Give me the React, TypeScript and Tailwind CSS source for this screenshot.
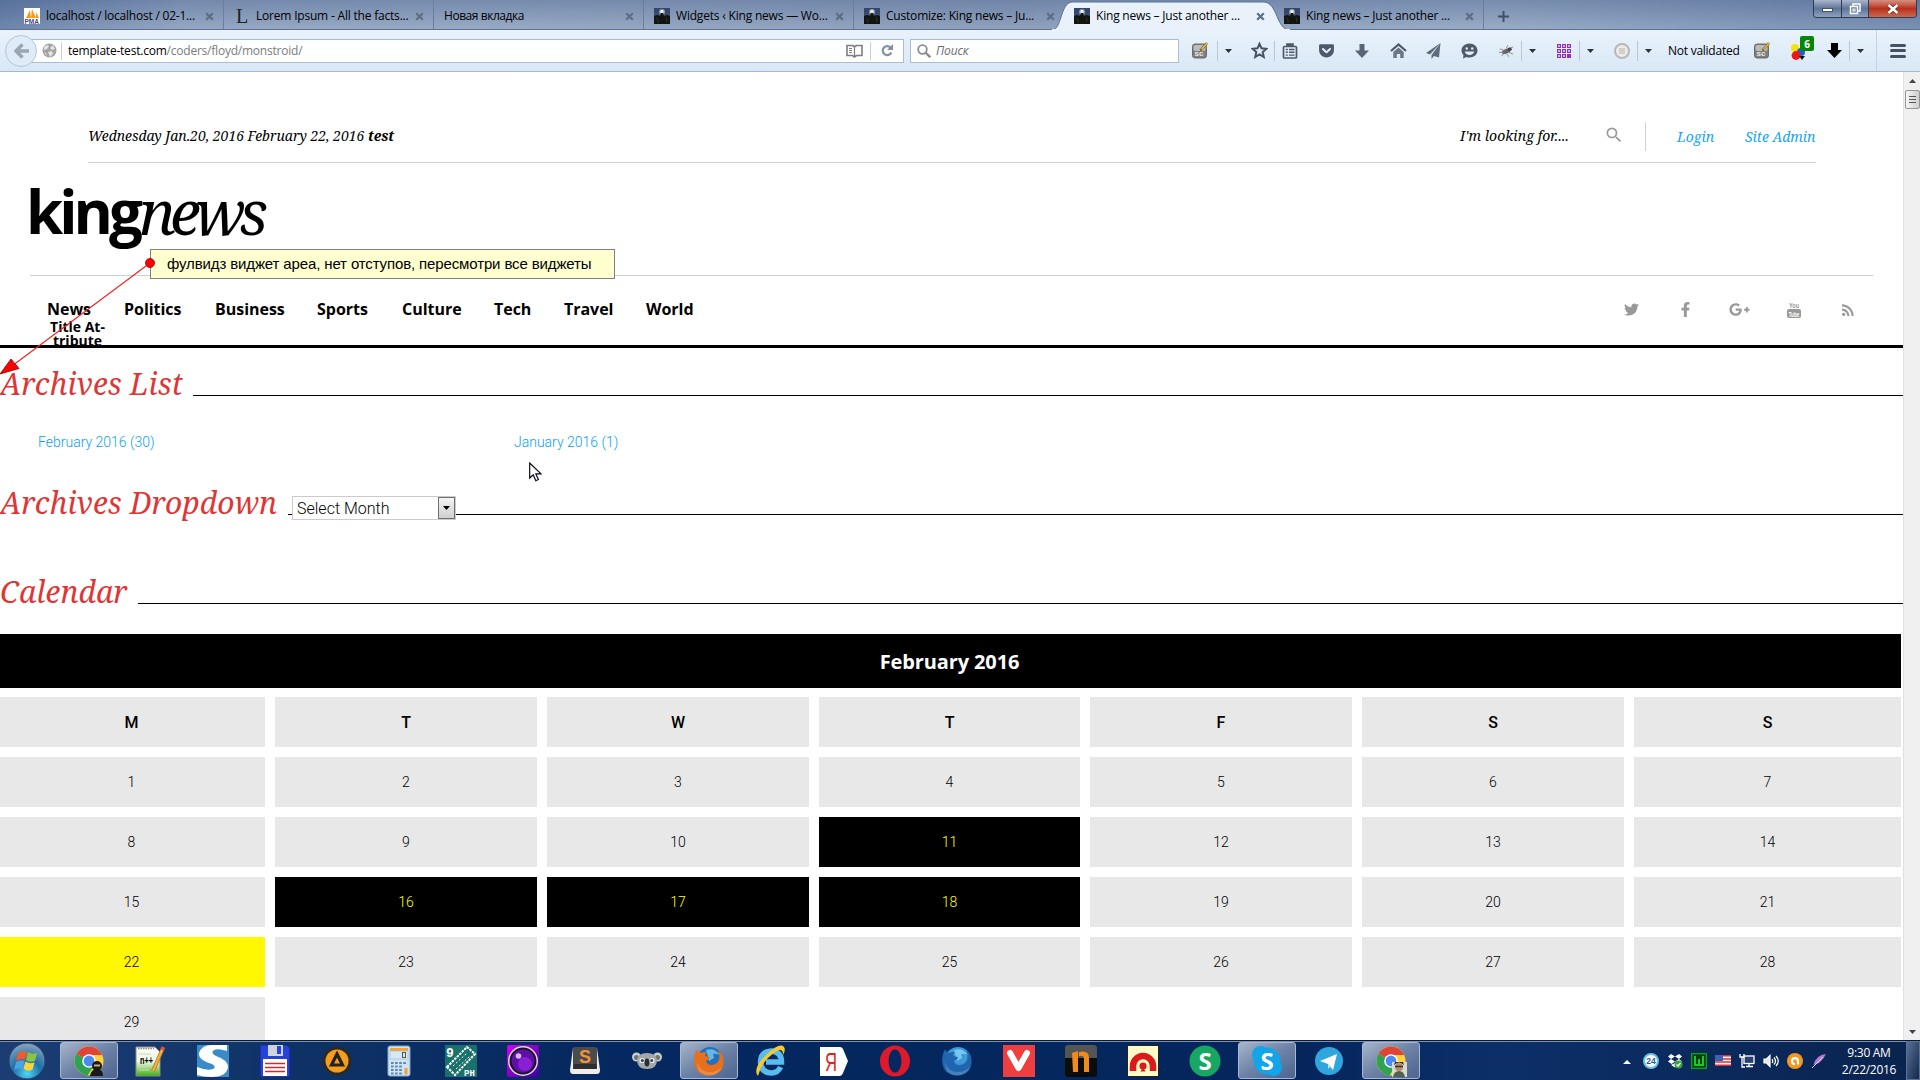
import React from "react";
import { FaTwitter, FaFacebookF, FaGooglePlusG, FaGetPocket } from "react-icons/fa";
import { MdSearch, MdRssFeed } from "react-icons/md";

const UI = "font-['Open_Sans']";
const SERIF = "font-['Noto_Serif','Droid_Serif','DejaVu_Serif_Condensed','DejaVu_Serif',serif]";

function ThemeIcon() {
  return (
    <svg width="16" height="16" viewBox="0 0 16 16">
      <rect width="16" height="16" fill="#3b4c6e" />
      <rect width="16" height="5" fill="#34466c" />
      <circle cx="8" cy="4" r="3" fill="#8f9db8" />
      <circle cx="8" cy="3.5" r="1.700" fill="#f3efdc" />
      <path d="M0 8l3-1 3 1 1-3h2l1 3 3-1 3 1v8H0z" fill="#12140f" />
      <path d="M2 10l2 1v4M12 9l1 5" stroke="#2d3324" fill="none" />
    </svg>
  );
}
function PmaIcon() {
  return (
    <svg width="16" height="16" viewBox="0 0 16 16">
      <rect width="16" height="16" fill="#fff" />
      <path d="M2 10L6 2l1 8zM7 10l1-9 4 9zM12 10V4l3 6z" fill="#f59a1b" />
      <text x="0.5" y="16" fontSize="6.5" fontWeight="700" fontFamily="Liberation Sans" fill="#4a4a86">PMA</text>
    </svg>
  );
}
function LoremIcon() {
  return <span className="w-4 text-center font-['Liberation_Serif'] text-[20px] leading-4 text-[#222]">L</span>;
}
function CloseX() {
  return (
    <svg width="9" height="9" viewBox="0 0 9 9">
      <path d="M1.200 1.200l6.600 6.600M7.800 1.200L1.200 7.800" stroke="#5c6d84" strokeWidth="2.200" />
    </svg>
  );
}

const tabs = [
  { icon: <PmaIcon />, label: "localhost / localhost / 02-1...", cls: "w-[210px] ml-[14px] border-r", pad: "pl-[10px]", tr: "tracking-[-0.220px]" },
  { icon: <LoremIcon />, label: "Lorem Ipsum - All the facts...", cls: "w-[210px] border-r", pad: "pl-[10px]", tr: "tracking-[-0.200px]" },
  { icon: null, label: "Новая вкладка", cls: "w-[210px] border-r", pad: "pl-[10px]", tr: "tracking-[-0.450px]" },
  { icon: <ThemeIcon />, label: "Widgets ‹ King news — Wo...", cls: "w-[210px] border-r", pad: "pl-[10px]", tr: "tracking-[-0.200px]" },
  { icon: <ThemeIcon />, label: "Customize: King news – Ju...", cls: "w-[210px]", pad: "pl-[10px]", tr: "tracking-[-0.200px]" },
  { icon: <ThemeIcon />, label: "King news – Just another ...", cls: "w-[210px]", pad: "pl-[10px]", tr: "tracking-[-0.200px]", active: true },
  { icon: <ThemeIcon />, label: "King news – Just another ...", cls: "w-[210px] border-r", pad: "pl-[10px]", tr: "tracking-[-0.200px]" },
];

function TabBar() {
  return (
    <div className="relative flex h-[30px] items-stretch border-b border-[#5b7290] bg-[linear-gradient(to_right,#637ca6_0,#8b9fbe_180px,#8fa3c0_500px,#8699b8_1000px,#90a5c2_1500px,#6e87ad_1920px)]">
      <div className="absolute inset-0 bg-[linear-gradient(to_bottom,rgba(60,85,130,0.3),rgba(255,255,255,0.08))]" />
      {tabs.map((t, i) => (
        <div key={i} className={`relative flex items-center ${t.cls} ${t.pad} border-[#6b7f9c]`}>
          {t.active && (
            <svg className="absolute -left-[12px] top-[1px] z-0" width="238" height="29" viewBox="0 0 238 29">
              <path d="M0 29C10 29 8 2 20 1H212C226 2 224 29 238 29z" fill="#e9f2fb" stroke="#5b7290" />
              <path d="M0 29H238" stroke="#e9f2fb" strokeWidth="2" />
            </svg>
          )}
          <div className="relative flex flex-1 items-center pt-[3px]">
            {t.icon && <span className="mr-[6px] flex w-4">{t.icon}</span>}
            <span className={`flex-1 whitespace-nowrap text-[12px] leading-[16px] text-black ${UI} ${t.tr}`}>{t.label}</span>
            <span className="mr-[9px] flex">
              <CloseX />
            </span>
          </div>
        </div>
      ))}
      <div className="relative flex w-[38px] items-center justify-center pt-[3px]">
        <svg width="11" height="11" viewBox="0 0 11 11">
          <path d="M5.500 0v11M0 5.500h11" stroke="#3f5068" strokeWidth="2" />
        </svg>
      </div>
      <div className="relative ml-auto mr-[3px] flex h-[18px] overflow-hidden rounded-b-[4px] border border-t-0 border-[#2e3b52]">
        <div className="flex w-[28px] items-center justify-center border-r border-[#2e3b52] bg-gradient-to-b from-[#a9b7cd] via-[#5f7596] to-[#8ea2bf]">
          <span className="mt-[3px] h-[4px] w-[11px] border border-[#46536b] bg-white" />
        </div>
        <div className="flex w-[27px] items-center justify-center border-r border-[#2e3b52] bg-gradient-to-b from-[#a9b7cd] via-[#5f7596] to-[#8ea2bf]">
          <svg width="12" height="12" viewBox="0 0 12 12" fill="none" stroke="#fff" strokeWidth="1.500">
            <path d="M4 3V1h7v7H9" />
            <rect x="1.500" y="3.500" width="7" height="7" />
            <rect x="4" y="6" width="2" height="2" strokeWidth="1" />
          </svg>
        </div>
        <div className="flex w-[47px] items-center justify-center bg-gradient-to-b from-[#d58e82] via-[#b8301a] to-[#cf6650]">
          <svg width="12" height="10" viewBox="0 0 12 10">
            <path d="M1.500 1l9 8M10.500 1l-9 8" stroke="#5a2a25" strokeWidth="4" />
            <path d="M1.500 1l9 8M10.500 1l-9 8" stroke="#fff" strokeWidth="2.600" />
          </svg>
        </div>
      </div>
    </div>
  );
}

const Div = () => <span className="h-[20px] w-px bg-[#b9c8d8]" />;
const Caret = () => (
  <span className="flex w-[21px] justify-center">
    <svg width="7" height="4" viewBox="0 0 7 4">
      <path d="M0 0h7L3.500 4z" fill="#2b3542" />
    </svg>
  </span>
);
function Cell({ w, children }: { w: string; children: React.ReactNode }) {
  return <span className={`flex shrink-0 items-center justify-center ${w}`}>{children}</span>;
}
function SgIcon() {
  return (
    <svg width="18" height="17" viewBox="0 0 18 17">
      <rect x="1.500" y="2" width="14" height="14" rx="2.500" fill="#7f7f7d" stroke="#6a6a68" />
      <rect x="2.500" y="3" width="12" height="6" rx="2" fill="#bcbcb8" />
      <text x="3.500" y="14" fontSize="8" fontWeight="700" fontFamily="Liberation Sans" fill="#e8e8e8">sc</text>
      <path d="M9.500 8.500L16 1" stroke="#6a5a30" strokeWidth="2.600" />
      <path d="M10.500 7.500L16 1" stroke="#e8b73c" strokeWidth="1.700" />
    </svg>
  );
}

function Toolbar() {
  const c = "#4d5a6a";
  return (
    <div className="relative flex h-[42px] items-center border-b border-[#a3b9cf] bg-gradient-to-b from-[#e9f2fb] to-[#d9e8f6]">
      <div className="relative z-10 ml-[5px] flex size-[32px] items-center justify-center rounded-full border border-[#b4c6d9] bg-[#dfebf7]">
        <svg width="15" height="16" viewBox="0 0 15 16">
          <path d="M8.500 1.500L2 8l6.500 6.500M2.500 8H15" fill="none" stroke="#9aa6b3" strokeWidth="3.400" />
        </svg>
      </div>
      <div className="-ml-[6px] flex h-[24px] w-[873px] items-center border border-[#a9bed4] bg-white">
        <Cell w="ml-[9px] w-[16px]">
          <svg width="15" height="15" viewBox="0 0 15 15">
            <circle cx="7.500" cy="7.500" r="7" fill="#a3a3a3" />
            <path d="M2 4l3-2 2 1-2 3-3 1zM8 5l3-3 2 4-3 1zM6 9l4-1 1 3-3 3zM2 9l2 1 1 3z" fill="#e4e4e4" />
          </svg>
        </Cell>
        <span className="ml-[4px] h-[18px] w-px bg-[#d0d0d0]" />
        <span className={`ml-[6px] flex-1 whitespace-nowrap text-[12px] leading-[16px] tracking-[-0.220px] text-[#7c7c7c] ${UI}`}>
          <span className="text-black">template-test.com</span>/coders/floyd/monstroid/
        </span>
        <Cell w="w-[32px]">
          <svg width="17" height="14" viewBox="0 0 17 14" fill="none" stroke="#7d7d7d" strokeWidth="1.600">
            <path d="M1 1.500h5.500l2 1.200 2-1.200H16v10h-5.500l-2 1.500-2-1.500H1z" />
            <path d="M8.500 3v9M3 4.500h3M3 6.500h3M3 8.500h3" strokeWidth="1.200" />
          </svg>
        </Cell>
        <span className="h-[18px] w-px bg-[#cdcdcd]" />
        <Cell w="w-[32px]">
          <svg width="13" height="13" viewBox="0 0 13 13">
            <path d="M10.300 8.500A4.500 4.500 0 1 1 9.500 3.500" fill="none" stroke="#8291a3" strokeWidth="2.200" />
            <path d="M12 0v6H6z" fill="#8291a3" />
          </svg>
        </Cell>
      </div>
      <div className="ml-[6px] flex h-[24px] w-[269px] items-center border border-[#a9bed4] bg-white">
        <svg className="ml-[6px]" width="14" height="14" viewBox="0 0 14 14" fill="none" stroke="#8c8c8c">
          <circle cx="5.500" cy="5.500" r="4.300" strokeWidth="1.800" />
          <path d="M8.500 8.500l4.800 4.800" strokeWidth="2.400" />
        </svg>
        <span className={`ml-[5px] text-[12px] italic leading-[16px] tracking-[-0.100px] text-[#6e6e6e] ${UI}`}>Поиск</span>
      </div>
      <Cell w="ml-[4px] w-[34px]"><SgIcon /></Cell>
      <Div />
      <Caret />
      <Cell w="ml-[5px] w-[30px]">
        <svg width="17" height="17" viewBox="0 0 17 17">
          <path d="M8.500 1.800l2 4.500 4.900.5-3.700 3.300 1.100 4.900-4.300-2.500L4.200 15l1.100-4.900L1.600 6.800l4.900-.5z" fill="none" stroke="#46525f" strokeWidth="2" />
        </svg>
      </Cell>
      <Div />
      <Cell w="w-[30px]">
        <svg width="16" height="16" viewBox="0 0 16 16" fill="none" stroke={c} strokeWidth="1.700">
          <rect x="1.500" y="3.500" width="13" height="11.500" rx="1" />
          <path d="M5 3.500V1.200h6v2.300" fill={c} />
          <path d="M3.800 6.500h2M7 6.500h5.500M3.800 9.300h2M7 9.300h5.500M3.800 12.100h2M7 12.100h5.500" strokeWidth="1.400" />
        </svg>
      </Cell>
      <Cell w="ml-[3px] w-[36px]"><FaGetPocket size={17} color={c} /></Cell>
      <Cell w="w-[36px]">
        <svg width="14" height="16" viewBox="0 0 14 16">
          <path d="M4.500 1h5v6.500H14L7 15 0 7.500h4.500z" fill="#596675" />
        </svg>
      </Cell>
      <Cell w="w-[36px]">
        <svg width="17" height="15" viewBox="0 0 17 15">
          <path d="M1 8l7.500-6.500L16 8" fill="none" stroke={c} strokeWidth="2.200" />
          <path d="M3.300 9L8.500 4.500 13.700 9v6h-3.500v-4H6.800v4H3.300z" fill="#6b7786" />
        </svg>
      </Cell>
      <Cell w="w-[35px]">
        <svg width="15" height="16" viewBox="0 0 15 16">
          <path d="M14.500 0L0 10l4 1.500zM14.500 0L5.500 12v4l2.500-3 5 1.500z" fill="#5f6c7b" />
        </svg>
      </Cell>
      <Cell w="w-[37px]">
        <svg width="17" height="16" viewBox="0 0 17 16">
          <path d="M8.500.5c4.500 0 8 3 8 7s-3.500 7-8 7c-1 0-2-.1-3-.5L2 15.500l.5-3.500C1.200 10.700.5 9.200.5 7.500c0-4 3.500-7 8-7z" fill="#4f5b6a" />
          <circle cx="5.800" cy="5.500" r="1.200" fill="#e3edf7" />
          <circle cx="11.200" cy="5.500" r="1.200" fill="#e3edf7" />
          <path d="M3.800 8.500h9.400c-.5 2.300-2.300 3.500-4.700 3.500s-4.200-1.200-4.700-3.500z" fill="#e3edf7" />
        </svg>
      </Cell>
      <Cell w="ml-[3px] w-[30px]">
        <svg width="15" height="12" viewBox="0 0 17 13">
          <ellipse cx="8" cy="7" rx="5" ry="2.600" fill="#666" transform="rotate(-20 8 7)" />
          <path d="M1 4l5 2M0 8l5 0M3 12l3-3M9 10l2 3M11 8l5 2M10 4l6-2M8 4l2-4" stroke="#8a8a8a" strokeWidth="1.100" />
          <ellipse cx="12" cy="4.500" rx="2.500" ry="2" fill="#444" />
        </svg>
      </Cell>
      <Div />
      <Caret />
      <Cell w="ml-[6px] w-[30px]">
        <span className="grid grid-cols-3 gap-px">
          {[0, 1, 2, 3, 4, 5, 6, 7, 8].map((n) => (
            <span key={n} className={n === 8 ? "size-[4px] bg-[#9a30cc]" : "size-[4px] border border-[#8e33b5] bg-[#d9a8ea]"} />
          ))}
        </span>
      </Cell>
      <Div />
      <Caret />
      <Cell w="ml-[6px] w-[30px]">
        <span className="flex size-[16px] items-center justify-center rounded-full border-2 border-[#b8b8b8] bg-[#ececec]">
          <span className="size-[6px] bg-[#d3cfc8]" />
        </span>
      </Cell>
      <Div />
      <Caret />
      <span className={`ml-[9px] w-[73px] whitespace-nowrap text-[12px] leading-[16px] tracking-[-0.250px] text-black ${UI}`}>Not validated</span>
      <Cell w="ml-[6px] w-[30px]"><SgIcon /></Cell>
      <Cell w="relative ml-[6px] w-[30px]">
        <svg width="16" height="16" viewBox="0 0 16 16" className="mt-[3px]">
          <circle cx="5" cy="4" r="4" fill="#f5e400" />
          <circle cx="11" cy="8" r="4" fill="#1e5bd8" />
          <circle cx="6" cy="11.500" r="4.400" fill="#f01414" />
          <path d="M9 12h6l-3 4z" fill="#111" />
        </svg>
        <span className={`absolute -top-[5px] left-[17px] flex h-[15px] w-[14px] items-center justify-center rounded-[2px] bg-[#078607] text-[10px] font-bold leading-none text-white ${UI}`}>6</span>
      </Cell>
      <Cell w="ml-[6px] w-[30px]">
        <svg width="15" height="15" viewBox="0 0 15 15">
          <path d="M4 0h7v7h4l-7.500 8L0 7h4z" fill="#000" />
        </svg>
      </Cell>
      <Div />
      <Caret />
      <span className="ml-[5px] h-full w-px bg-[#c3d3e3]" />
      <Cell w="ml-[6px] w-[30px]">
        <span className="flex flex-col gap-[2.500px]">
          <span className="h-[3px] w-[16px] rounded-sm bg-[#45525f]" />
          <span className="h-[3px] w-[16px] rounded-sm bg-[#45525f]" />
          <span className="h-[3px] w-[16px] rounded-sm bg-[#45525f]" />
        </span>
      </Cell>
    </div>
  );
}

const nav = [
  ["News", "w-[77px]"],
  ["Politics", "w-[91px]"],
  ["Business", "w-[102px]"],
  ["Sports", "w-[85px]"],
  ["Culture", "w-[92px]"],
  ["Tech", "w-[70px]"],
  ["Travel", "w-[82px]"],
  ["World", "w-[60px]"],
];

function Header() {
  return (
    <header className="relative h-[276px] border-b-[3px] border-black">
      <div className="ml-[88px] flex h-[91px] w-[1728px] border-b border-[#cfcfcf] pt-[48px]">
        <p className={`mt-[6px] flex-1 text-[14px] italic leading-[20px] tracking-[-0.030px] text-black ${SERIF}`}>
          Wednesday Jan.20, 2016 February 22, 2016 <b>test</b>
        </p>
        <span className={`mt-[6px] w-[144px] text-[14px] italic leading-[20px] tracking-[0.080px] text-black ${SERIF}`}>I'm looking for....</span>
        <MdSearch className="mt-[5px] text-[#9a9a9a]" size={20} />
        <span className="ml-[21px] mt-[2px] h-[29px] w-px bg-[#cfcfcf]" />
        <span className={`ml-[31px] mt-[7px] w-[68px] text-[14px] italic leading-[20px] text-[#14a5f8] ${SERIF}`}>Login</span>
        <span className={`mt-[7px] w-[71px] whitespace-nowrap text-[14px] italic leading-[20px] text-[#14a5f8] ${SERIF}`}>Site Admin</span>
      </div>
      <div className="ml-[26px] flex h-[112px] items-start pt-[7px]">
        <span className="font-['Open_Sans'] text-[60px] font-bold leading-[82px] tracking-[-4px] text-black">king</span>
        <span className={`text-[62px] italic leading-[82px] tracking-[-6px] text-black ${SERIF}`}>news</span>
      </div>
      <div className="ml-[30px] h-px w-[1843px] bg-[#cfcfcf]" />
      <div className="flex h-[69px]">
        <nav className="ml-[47px] flex pt-[21px]">
          {nav.map(([n, w]) => (
            <div key={n} className={`${w} font-['Open_Sans'] text-[16px] font-bold leading-[24px] tracking-[-0.030px] text-black`}>
              {n}
              {n === "News" && (
                <div className="-mt-px w-[61px] text-center text-[14px] leading-[14px] tracking-normal">
                  Title At-
                  <br />
                  tribute
                </div>
              )}
            </div>
          ))}
        </nav>
        <div className="ml-auto mr-[28px] flex h-[67px] items-center text-[#999]">
          <Cell w="w-[54px]"><FaTwitter size={15} /></Cell>
          <Cell w="w-[54px]"><FaFacebookF size={15} /></Cell>
          <Cell w="w-[55px]"><FaGooglePlusG size={21} /></Cell>
          <Cell w="w-[54px]">
            <svg width="14" height="17" viewBox="0 0 14 17" className="overflow-visible">
              <text x="7" y="7" textAnchor="middle" fontSize="8" fontWeight="700" textLength="10" lengthAdjust="spacingAndGlyphs" fontFamily="Liberation Sans" fill="#999">You</text>
              <rect x="0" y="8" width="14" height="9" rx="2" fill="#999" />
              <text x="7" y="15.500" textAnchor="middle" fontSize="7.500" fontWeight="700" textLength="11" lengthAdjust="spacingAndGlyphs" fontFamily="Liberation Sans" fill="#fff">Tube</text>
            </svg>
          </Cell>
          <Cell w="w-[54px]"><MdRssFeed size={18} /></Cell>
        </div>
      </div>
    </header>
  );
}

function Note() {
  return (
    <>
      <div className="absolute left-[150px] top-[177px] flex h-[30px] w-[465px] items-center border border-[#808080] bg-[#ffffd0] pl-[16px]">
        <span className="whitespace-nowrap font-['Liberation_Sans'] text-[15px] leading-[20px] tracking-[-0.130px] text-black">фулвидз виджет ареа, нет отступов, пересмотри все виджеты</span>
      </div>
      <svg className="absolute left-0 top-[180px]" width="160" height="130" viewBox="0 252 160 130">
        <path d="M150 263L12 366" stroke="#f02020" strokeWidth="1.100" />
        <circle cx="150" cy="263" r="4.500" fill="#f00" stroke="#900" strokeWidth="0.800" />
        <path d="M0 374L11 359 19 368.500z" fill="#f00" stroke="#800" strokeWidth="0.800" />
      </svg>
    </>
  );
}

function Title({ children, gap, extra }: { children: string; gap: string; extra?: React.ReactNode }) {
  return (
    <div className="flex h-[44px] items-end">
      <h2 className={`-mb-[1px] shrink-0 whitespace-nowrap text-[30px] italic leading-[44px] tracking-[0.080px] text-[#df3535] ${SERIF} ${gap}`}>{children}</h2>
      <div className="mb-[9px] flex flex-1 items-end border-b border-black">{extra}</div>
    </div>
  );
}

const rows = [
  [1, 2, 3, 4, 5, 6, 7],
  [8, 9, 10, 11, 12, 13, 14],
  [15, 16, 17, 18, 19, 20, 21],
  [22, 23, 24, 25, 26, 27, 28],
  [29],
];
const COLS = "grid grid-cols-[265px_262px_262px_261px_262px_262px_267px] gap-x-[10px]";

function Calendar() {
  return (
    <div className="w-[1901px]">
      <div className="flex h-[54px] items-center justify-center bg-black font-['Open_Sans'] text-[20px] font-bold tracking-[-0.120px] text-white">
        <span className="-ml-[2px] mt-[2px]">February 2016</span>
      </div>
      <div className={`${COLS} mt-[9px]`}>
        {["M", "T", "W", "T", "F", "S", "S"].map((d, i) => (
          <div key={i} className={`flex h-[50px] items-center justify-center bg-[#e8e8e8] pt-[2px] font-['Roboto'] text-[16px] font-medium text-black ${i === 0 ? "pr-[2px]" : ""}`}>
            {d}
          </div>
        ))}
      </div>
      {rows.map((r, i) => (
        <div key={i} className={`${COLS} mt-[10px]`}>
          {r.map((d, j) => {
            const tone = [11, 16, 17, 18].includes(d) ? "bg-black text-[#ffff00]" : d === 22 ? "bg-[#fff800] text-black" : "bg-[#e8e8e8] text-black";
            return (
              <div key={d} className={`flex h-[50px] items-center justify-center pt-px font-['Roboto'] text-[14px] font-light ${tone} ${j === 0 ? "pr-[2px]" : ""}`}>
                {d}
              </div>
            );
          })}
        </div>
      ))}
    </div>
  );
}

function Page() {
  return (
    <div className="relative flex h-[968px] overflow-hidden bg-white">
      <main className="h-full w-[1903px] overflow-hidden">
        <Header />
        <div className="pt-[13px]">
          <Title gap="w-[193px]">Archives List</Title>
        </div>
        <div className="mt-[27px] flex pl-[38px] font-['Roboto'] text-[14px] font-light leading-[20px] text-[#0a9ff6]">
          <span className="w-[476px]">February 2016 (30)</span>
          <span>January 2016 (1)</span>
        </div>
        <div className="mt-[28px]">
          <Title
            gap="w-[288px]"
            extra={
              <div className="-mb-[6px] ml-[4px] flex h-[24px] w-[164px] items-center border border-[#cbcbcb] bg-white pl-[4px]">
                <span className="flex-1 pt-px font-['Roboto'] text-[16px] font-light leading-[20px] text-black">Select Month</span>
                <span className="flex h-[22px] w-[17px] items-center justify-center border border-[#707070] bg-gradient-to-b from-[#f4f4f4] to-[#cfcfcf]">
                  <svg width="7" height="4" viewBox="0 0 7 4">
                    <path d="M0 0h7L3.500 4z" fill="#000" />
                  </svg>
                </span>
              </div>
            }
          >
            Archives Dropdown
          </Title>
        </div>
        <div className="mt-[45px]">
          <Title gap="w-[138px]">Calendar</Title>
        </div>
        <div className="mt-[21px]">
          <Calendar />
        </div>
      </main>
      <div className="flex h-full w-[17px] flex-col items-center border-l border-[#e0e0e0] bg-[#f0f0f0]">
        <svg className="mt-[7px]" width="7" height="4" viewBox="0 0 7 4"><path d="M0 4h7L3.500 0z" fill="#444" /></svg>
        <div className="mt-[7px] flex h-[19px] w-[15px] flex-col items-center justify-center gap-[2px] rounded-[2px] border border-[#959595] bg-gradient-to-r from-[#f6f6f6] to-[#cfcfd2]">
          <span className="h-px w-[7px] bg-[#555]" />
          <span className="h-px w-[7px] bg-[#555]" />
          <span className="h-px w-[7px] bg-[#555]" />
        </div>
        <svg className="mb-[6px] mt-auto" width="7" height="4" viewBox="0 0 7 4"><path d="M0 0h7L3.500 4z" fill="#444" /></svg>
      </div>
      <Note />
      <svg className="absolute left-[529px] top-[390px]" width="13" height="20" viewBox="0 0 13 20">
        <path d="M.7 1v15l3.500-3.300 2.600 6 2.600-1.200-2.600-5.700H12z" fill="#fff" stroke="#0a0a1e" strokeWidth="1.200" />
      </svg>
    </div>
  );
}

function Chrome() {
  return (
    <g>
      <circle cx="16" cy="16" r="14.500" fill="#fdd23c" />
      <path d="M16 16L3.500 8.700A14.500 14.500 0 0 1 28.500 8.700L29 10H16z" fill="#de4437" />
      <path d="M16 16L3.500 8.700A14.500 14.500 0 0 0 14.500 30.400L22 19z" fill="#2fa353" />
      <circle cx="16" cy="16" r="6.800" fill="#fff" />
      <circle cx="16" cy="16" r="5.400" fill="#4a8af4" />
    </g>
  );
}
function Fox({ a, b, c }: { a: string; b: string; c: string }) {
  return (
    <g>
      <circle cx="17" cy="15" r="13" fill={b} />
      <path d="M13 5Q21 2 27 10q-4-2-7-1l1 4-5 3q-1-5-3-11z" fill={c} />
      <path d="M4 4.500q1.500 2 4 3.500 3-1.500 6-1-2.500 2-1.500 4 2 1 4.500 1-.5 3-4 3.500.5 4.500 5.500 4.500 6.500 0 8-7 .5-4-1.500-8 6.500 5 5.500 13.500Q29 30 16 30.500 2.500 30 1.200 17 1 9 4 4.500z" fill={a} />
      <path d="M4 17q3 10 13 10 8 0 12-6-3 9.500-13 9.500Q4 30 4 17z" fill="#fff" opacity=".18" />
    </g>
  );
}

const icons: { k: string; on?: boolean; g: React.ReactNode }[] = [
  { k: "chrome", on: true, g: <><Chrome /><circle cx="24" cy="21" r="5" fill="#1a1a1a" /><path d="M17 31q1-7 7-7t6 7z" fill="#1a1a1a" /><rect x="21" y="19.500" width="6" height="2" fill="#d9a77c" /></> },
  { k: "npp", g: <><defs><linearGradient id="npp" x1="0" y1="0" x2="0" y2="1"><stop offset="0" stopColor="#fbfbf8" /><stop offset=".5" stopColor="#eef8e2" /><stop offset="1" stopColor="#3fae12" /></linearGradient></defs><path d="M1 2h19l5 5v24H1z" fill="url(#npp)" stroke="#8a8a80" /><path d="M3 3.500h16" stroke="#888" strokeWidth="1.500" strokeDasharray="1.500 1" /><path d="M4 9h12M4 22h10M4 25h10" stroke="#c4d8b8" /><text x="5" y="19" fontSize="11" fontWeight="700" textLength="13" lengthAdjust="spacingAndGlyphs" fontFamily="Liberation Sans">n++</text><path d="M18 26L28 3" stroke="#b36a17" strokeWidth="3.800" /><path d="M18 26L28 3" stroke="#f3b03c" strokeWidth="2.400" /><path d="M27.200 5L28.300 2" stroke="#d8524a" strokeWidth="3.800" /></> },
  { k: "s", g: <><rect width="32" height="32" fill="#3a8cc8" /><path d="M0 0h7Q0 6 3 12q2 4 10 7 5 2 3 5-4 3-16-3z" fill="#3a8cc8" /><path d="M30 0v6q-9-3-13-1-4 3 2 6 12 4 12 11-1 10-17 10-8 0-14-2v-8q10 4 16 2 4-2-1-5Q1 15 2 8 5 0 14 0z" fill="#fff" /></> },
  { k: "floppy", g: <><path d="M1 0h27l3 3v29H1z" fill="#2742d8" stroke="#15248c" /><rect x="9" y="0" width="15" height="11" fill="#cfd4dc" /><rect x="18" y="1" width="4" height="8" fill="#2742d8" /><rect x="4" y="14" width="24" height="17" fill="#fff" /><path d="M6 18.500h20M6 22.500h20M6 26.500h20" stroke="#d8242a" strokeWidth="1.500" /></> },
  { k: "aimp", g: <><circle cx="16" cy="16" r="14.500" fill="#2a2a2a" /><circle cx="16" cy="16" r="11.500" fill="#f79d1e" /><path d="M16 9l5.500 11h-11z" fill="none" stroke="#222" strokeWidth="3.200" /></> },
  { k: "calc", g: <><rect x="5" y="1" width="22" height="30" rx="2" fill="#cfe3f3" stroke="#7fa8cb" /><rect x="7" y="3" width="18" height="3" fill="#f3a43a" /><rect x="7" y="6" width="18" height="8" fill="#d5e8f5" stroke="#9db9d0" strokeWidth=".6" /><rect x="19.500" y="7.500" width="3" height="5" fill="none" stroke="#555" /><path d="M8 18h16M8 21.500h11M8 25h11M8 28.500h11" stroke="#5d87b0" strokeWidth="2.200" strokeDasharray="2.600 1.500" /><rect x="21.500" y="23" width="3" height="6.500" fill="#f2a03a" /></> },
  { k: "ph", g: <><rect width="32" height="32" fill="#19716b" /><path d="M2 22L22 2l8 7L10 30z" fill="none" stroke="#fff" strokeWidth="2" strokeDasharray="2.500 1" /><path d="M8 21L22 8M11 24L25 11" stroke="#fff" strokeDasharray="2 2" /><text x="1" y="12" fontSize="13" fontWeight="700" fill="#fff" fontFamily="Liberation Mono">9</text><text x="19" y="31" fontSize="9" fontWeight="700" fill="#fff" fontFamily="Liberation Mono">PH</text></> },
  { k: "lens", g: <><defs><linearGradient id="lens" x1="0" y1="0" x2="1" y2="1"><stop offset="0" stopColor="#d400ee" /><stop offset="1" stopColor="#3a00a0" /></linearGradient></defs><rect width="32" height="32" rx="2" fill="url(#lens)" /><circle cx="16" cy="16" r="15" fill="#d9d9e2" /><circle cx="16" cy="16" r="13.500" fill="#1c1326" /><circle cx="16" cy="16" r="11.500" fill="#5f0fa5" /><circle cx="18" cy="19" r="7" fill="#8a1fd6" /><circle cx="11.500" cy="11" r="2.800" fill="#dcb4f2" /></> },
  { k: "subl", g: <><path d="M4 3L1 25q0 4 3 4h24q3 0 3-4L28 3z" fill="#ededed" /><rect x="4" y="2" width="24" height="22" rx="2" fill="#4b4b4b" /><path d="M5 19h22l1 5H4z" fill="#2e2e2e" /><text x="16" y="18" textAnchor="middle" fontSize="18" fontWeight="700" fill="#f2923a" fontFamily="Liberation Sans">S</text></> },
  { k: "bot", g: <><circle cx="5.500" cy="12" r="4.500" fill="#c9cdcc" /><circle cx="26.500" cy="12" r="4.500" fill="#c9cdcc" /><circle cx="5.500" cy="12.500" r="2.500" fill="#6e7473" /><circle cx="26.500" cy="12.500" r="2.500" fill="#6e7473" /><path d="M6 15q1-7 10-7t10 7q0 9-10 9T6 15z" fill="#a3a8a7" /><circle cx="11" cy="15.500" r="2.600" fill="#e9eef2" /><circle cx="21" cy="15.500" r="2.600" fill="#e9eef2" /><circle cx="11.300" cy="15.500" r="1.500" fill="#24445e" /><circle cx="20.700" cy="15.500" r="1.500" fill="#24445e" /><ellipse cx="16" cy="17.500" rx="2.400" ry="4" fill="#2c2c2e" /></> },
  { k: "ff", on: true, g: <Fox a="#e8701c" b="#2371b8" c="#63b9ea" /> },
  { k: "ie", g: <><path d="M25.500 22q-2.500 6-9.500 6-10-.5-10.500-11Q6 6.500 16 6q10.500.5 10.500 11H11" fill="none" stroke="#57bdf0" strokeWidth="5.500" /><path d="M3 31Q-3 24 11 10 25-3 29 2q2 3-1 8 0-7-6-4Q7 15 3 31z" fill="#f6c832" /></> },
  { k: "ya", g: <><path d="M3 2h20q2 0 3 2l5 12-5 12q-1 3-3 3H3z" fill="#fff" /><text x="14" y="26" textAnchor="middle" fontSize="26" fill="#e0211c" textLength="12" lengthAdjust="spacingAndGlyphs" fontFamily="Liberation Sans">Я</text></> },
  { k: "opera", g: <><ellipse cx="16" cy="16" rx="15" ry="15.500" fill="#dc1a2c" /><ellipse cx="16" cy="16" rx="6.500" ry="11.500" fill="#04285f" /></> },
  { k: "ffd", g: <Fox a="#1f66ae" b="#3c9ad8" c="#78c6f0" /> },
  { k: "viv", g: <><rect width="32" height="32" fill="#ee3e40" /><path d="M7 8L15.500 23 24 8" fill="none" stroke="#fff" strokeWidth="6" strokeLinecap="round" strokeLinejoin="round" /></> },
  { k: "n", g: <><rect width="32" height="32" rx="3" fill="#0c0c0c" /><path d="M0 3q0-3 3-3h26q3 0 3 3v10H0z" fill="#555" /><path d="M7 8l6-2v21H8zM14 7q10-2 10 6v14h-5V14q0-4-5-3z" fill="#f28a1e" /></> },
  { k: "arch", g: <><rect x=".5" y=".5" width="31" height="31" fill="#fffbc6" stroke="#222" /><path d="M6 26v-5a10 10 0 0 1 20 0v5" fill="none" stroke="#dd1a1a" strokeWidth="6.500" /><circle cx="16" cy="21" r="3.600" fill="#dd1a1a" /><path d="M15 24h2l1.500 2.500h-5z" fill="#dd1a1a" /></> },
  { k: "gs", g: <><circle cx="16" cy="16" r="15.500" fill="#17a763" /><text x="16" y="24.500" textAnchor="middle" fontSize="24" fontWeight="700" fill="#fff" fontFamily="Open Sans">S</text></> },
  { k: "skype", on: true, g: <><circle cx="16" cy="16" r="13.500" fill="#12a5ea" /><circle cx="9.500" cy="9.500" r="8.500" fill="#12a5ea" /><circle cx="22.500" cy="22.500" r="8.500" fill="#12a5ea" /><text x="16" y="24.500" textAnchor="middle" fontSize="24" fontWeight="700" fill="#fff" fontFamily="Open Sans">S</text></> },
  { k: "tg", g: <><circle cx="16" cy="16" r="14" fill="#2fa6de" /><path d="M7 16L24 9 20 25l-5-6z" fill="#fff" /><path d="M15 19v5l3-3z" fill="#c8dcea" /></> },
  { k: "chrome2", on: true, g: <><Chrome /><rect x="17" y="17" width="15" height="15" fill="#d8dbc8" /><circle cx="24" cy="22" r="4" fill="#b98a6c" /><path d="M19 20q5-5 10 0l-1-3h-8z" fill="#33261d" /><path d="M20 21.500h8" stroke="#333" strokeWidth="1.500" /><path d="M18 32q1-6 6-6t6 6z" fill="#55614e" /></> },
];

function Taskbar() {
  return (
    <div className="flex h-[40px] items-stretch border-t border-[#0a1a35] bg-[linear-gradient(to_right,#1b3d74_0,#0f3266_300px,#04285f_620px,#04265c_1300px,#0c2f68_1500px,#0a2450_1900px)] shadow-[inset_0_1px_0_#7f92b3]">
      <div className="flex w-[58px] items-center pl-[8px]">
        <svg width="38" height="38" viewBox="0 0 38 38">
          <defs>
            <radialGradient id="orb" cx=".5" cy=".85" r=".8"><stop offset="0" stopColor="#4fd6f7" /><stop offset=".5" stopColor="#1d6fa8" /><stop offset="1" stopColor="#7f9fbd" /></radialGradient>
          </defs>
          <circle cx="19" cy="19" r="18" fill="url(#orb)" stroke="#24405f" />
          <path d="M10 11q5-3 9-1l-2 8q-4-2-9 1z" fill="#ee5c2b" />
          <path d="M20 10q4 3 9 1l-2 8q-5 2-9-1z" fill="#8cc63e" />
          <path d="M8 20q5-3 8.500-1l-2 8q-4-2-8.500 1z" fill="#4ba3e3" />
          <path d="M17.500 19.500q4 3 9 1l-2 7q-5 3-9-1z" fill="#fcd23a" />
        </svg>
      </div>
      {icons.map((ic) => (
        <div key={ic.k} className="flex w-[62px] justify-center py-px">
          <div className={`flex w-[58px] items-center justify-center ${ic.on ? "rounded-[3px] border border-[#a9b8d0] bg-gradient-to-br from-[#a7b5cb] via-[#6d82a6] to-[#4c6590]" : ""}`}>
            <svg width="32" height="32" viewBox="0 0 32 32">{ic.g}</svg>
          </div>
        </div>
      ))}
      <div className="ml-auto flex items-center">
        <Cell w="w-[24px] pt-[2px]"><svg width="8" height="4" viewBox="0 0 8 4"><path d="M0 4h8L4 0z" fill="#fff" /></svg></Cell>
        <Cell w="w-[24px]"><svg width="16" height="16" viewBox="0 0 16 16"><circle cx="8" cy="8" r="7" fill="#fff" stroke="#6cc0ea" strokeWidth="2" /><text x="8" y="11" textAnchor="middle" fontSize="8.500" fontWeight="700" fill="#1d5f94" fontFamily="Liberation Sans">24</text></svg></Cell>
        <Cell w="w-[24px]"><svg width="16" height="16" viewBox="0 0 16 16"><path d="M4 1l4 2.500L4 6 1 3.500zM12 1l3 2.500L12 6 8 3.500zM4 6l4 2.500L4.500 11 1 8.500zM12 6l3 2.500-3.500 2.500L8 8.500zM4 12l4-2 4 2-4 2.500z" fill="#fff" /><circle cx="11.500" cy="11.500" r="4" fill="#38a53c" /><path d="M9.500 11.500l1.500 1.500 2.500-3" stroke="#fff" fill="none" strokeWidth="1.200" /></svg></Cell>
        <Cell w="w-[24px]"><svg width="16" height="16" viewBox="0 0 16 16"><rect x=".7" y=".7" width="14.600" height="14.600" fill="#053b0b" stroke="#0aa01c" strokeWidth="1.400" /><path d="M4 3v9h8V3M8 6v6" fill="none" stroke="#17c92c" strokeWidth="2" /></svg></Cell>
        <Cell w="w-[24px]"><svg width="16" height="11" viewBox="0 0 16 11"><rect width="16" height="11" fill="#f4f4f4" /><path d="M0 .8h16M0 3.900h16M0 7h16M0 10.200h16" stroke="#d2333d" strokeWidth="1.500" /><rect width="8" height="6" fill="#3b62b5" /></svg></Cell>
        <Cell w="w-[24px]"><svg width="16" height="15" viewBox="0 0 16 15" fill="none" stroke="#fff" strokeWidth="1.300"><rect x="5" y="3" width="10" height="7.500" fill="#27406d" /><path d="M7 13.500h7M10 11v2M1 1v3h4V1M3 4v10h3" /></svg></Cell>
        <Cell w="w-[24px]"><svg width="16" height="14" viewBox="0 0 16 14" fill="none" stroke="#fff" strokeWidth="1.200"><path d="M1 5h2.500L7 1.500v11L3.500 9H1z" fill="#e6e6e6" /><path d="M9 5q1.500 2 0 4M11 3.500q3 3.500 0 7M13 2q4.500 5 0 10" /></svg></Cell>
        <Cell w="w-[24px]"><svg width="16" height="16" viewBox="0 0 16 16"><circle cx="8" cy="8" r="8" fill="#f5981d" /><path d="M11 11.500V8a3 3 0 1 0-3 3.200" fill="none" stroke="#fff" strokeWidth="2.200" /></svg></Cell>
        <Cell w="w-[24px]"><svg width="16" height="16" viewBox="0 0 16 16"><path d="M15 1Q5 2 2.500 12 10 11 15 1z" fill="#b07cd6" /><path d="M1 15L12 4" stroke="#e3c9f4" /></svg></Cell>
        <div className={`ml-[6px] w-[64px] text-center text-[12px] leading-[17px] tracking-[-0.280px] text-white ${UI}`}>
          9:30 AM
          <br />
          2/22/2016
        </div>
      </div>
      <div className="ml-[5px] w-[14px] border border-[#5c7090] bg-gradient-to-br from-[#5c7195] to-[#12294f]" />
    </div>
  );
}

export default function App() {
  return (
    <div className="h-[1080px] w-[1920px] overflow-hidden bg-white">
      <TabBar />
      <Toolbar />
      <Page />
      <Taskbar />
    </div>
  );
}
